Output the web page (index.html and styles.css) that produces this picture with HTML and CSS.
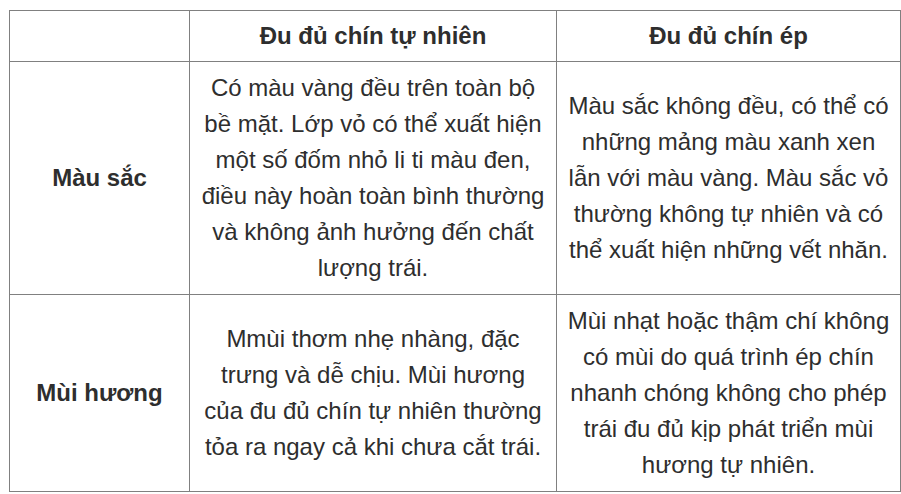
FILE: index.html
```html
<!DOCTYPE html>
<html lang="vi">
<head>
<meta charset="utf-8">
<link rel="stylesheet" href="styles.css">
</head>
<body>
<table class="cmp">
  <colgroup>
    <col class="c1">
    <col class="c2">
    <col class="c3">
  </colgroup>
  <thead>
    <tr>
      <th></th>
      <th>Đu đủ chín tự nhiên</th>
      <th>Đu đủ chín ép</th>
    </tr>
  </thead>
  <tbody>
    <tr>
      <th>Màu sắc</th>
      <td>Có màu vàng đều trên toàn bộ bề mặt. Lớp vỏ có thể xuất hiện một số đốm nhỏ li ti màu đen, điều này hoàn toàn bình thường và không ảnh hưởng đến chất lượng trái.</td>
      <td>Màu sắc không đều, có thể có những mảng màu xanh xen lẫn với màu vàng. Màu sắc vỏ thường không tự nhiên và có thể xuất hiện những vết nhăn.</td>
    </tr>
    <tr>
      <th>Mùi hương</th>
      <td>Mmùi thơm nhẹ nhàng, đặc trưng và dễ chịu. Mùi hương của đu đủ chín tự nhiên thường tỏa ra ngay cả khi chưa cắt trái.</td>
      <td>Mùi nhạt hoặc thậm chí không có mùi do quá trình ép chín nhanh chóng không cho phép trái đu đủ kịp phát triển mùi hương tự nhiên.</td>
    </tr>
  </tbody>
</table>
</body>
</html>
```
FILE: styles.css
```css
html, body {
  margin: 0;
  padding: 0;
  background: #ffffff;
}
body {
  padding: 10px 0 0 9px;
  font-family: "Liberation Sans", Arial, sans-serif;
  font-size: 24px;
  color: #2e2e2e;
}
.cmp {
  border-collapse: collapse;
  table-layout: fixed;
  width: 891px;
}
.c1 { width: 180px; }
.c2 { width: 367px; }
.c3 { width: 344px; }
.cmp th,
.cmp td {
  border: 1px solid #808080;
  padding: 8px 9px;
  line-height: 36px;
  text-align: center;
  vertical-align: middle;
}
.cmp thead th {
  padding-top: 7px;
  padding-bottom: 7px;
}
.cmp th {
  font-weight: bold;
}
.cmp td {
  font-weight: normal;
}
```
